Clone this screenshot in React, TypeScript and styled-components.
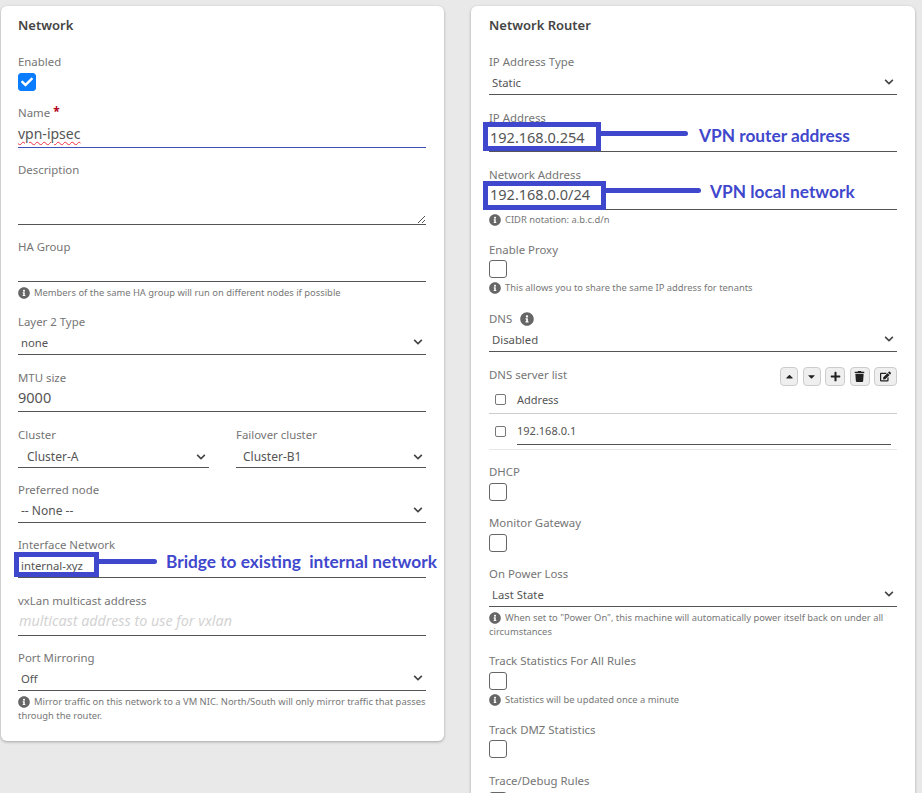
import React from 'react'
import styled, { createGlobalStyle } from 'styled-components'
import {
  FaCaretDown,
  FaCaretUp,
  FaCheck,
  FaChevronDown,
  FaEdit,
  FaInfoCircle,
  FaPlus,
  FaTrash,
} from 'react-icons/fa'

const GlobalStyle = createGlobalStyle`
  html, body {
    margin: 0;
    height: 793px;
    overflow: hidden;
    background: #e9e9e9;
    font-family: 'Noto Sans', 'Open Sans', sans-serif;
    color: #555;
  }
`

const Page = styled.div`
  display: flex;
  align-items: flex-start;
  gap: 27px;
  padding: 6px 0 0 1px;
`

const Card = styled.section`
  width: 443px;
  box-sizing: border-box;
  padding: 9px 18px 18px 17px;
  background: #fff;
  border-radius: 6px;
  box-shadow: 0 1px 3px rgba(0, 0, 0, 0.3);
  flex-shrink: 0;
`

const RouterPanel = styled(Card)`
  width: 444px;
  padding-left: 18px;
`

const Title = styled.h2`
  margin: 0;
  font-size: 13px;
  line-height: 20px;
  font-weight: 600;
  color: #444;
`

const Field = styled.div<{ $gap?: number }>`
  margin-top: ${(p) => p.$gap ?? 14}px;
`

const Label = styled.div`
  height: 16px;
  line-height: 16px;
  font-size: 11.4px;
  color: #757575;
  display: flex;
  align-items: center;
  gap: 3px;
`

const Required = styled.span`
  color: #b00020;
  font-size: 12px;
  font-weight: 700;
  line-height: 10px;
  margin-top: -3px;
`

const Control = styled.div<{ $h?: number; $active?: boolean }>`
  position: relative;
  height: ${(p) => p.$h ?? 24}px;
  border-bottom: 1px solid ${(p) => (p.$active ? '#3f51b5' : '#555')};
`

const InputText = styled.div<{ $size?: number; $misspelled?: boolean; $indent?: number; $lift?: number }>`
  height: 100%;
  box-sizing: border-box;
  display: flex;
  align-items: center;
  padding-left: ${(p) => p.$indent ?? 0}px;
  padding-bottom: ${(p) => p.$lift ?? 4}px;
  font-size: ${(p) => p.$size ?? 14.5}px;
  color: #555;
  span {
    text-decoration: ${(p) => (p.$misspelled ? 'underline wavy #f03040 1px' : 'none')};
    text-underline-offset: 2px;
  }
`

const Placeholder = styled(InputText)`
  font-size: 14.3px;
  font-style: italic;
  color: #d3d3d3;
  padding-left: 1px;
  padding-bottom: 3px;
`

const SelectBox = styled.div<{ $size?: number; $indent?: number; $drop?: number }>`
  height: 100%;
  box-sizing: border-box;
  display: flex;
  align-items: center;
  justify-content: space-between;
  padding: ${(p) => p.$drop ?? 0}px 3px 0 ${(p) => p.$indent ?? 3}px;
  font-size: ${(p) => p.$size ?? 11.3}px;
  color: #555;
  svg {
    width: 10px;
    height: 10px;
    color: #444;
  }
`

const Resize = styled.svg`
  position: absolute;
  right: 1px;
  bottom: 1px;
  width: 8px;
  height: 8px;
`

const Help = styled.div<{ $top?: number }>`
  margin-top: ${(p) => p.$top ?? 3}px;
  font-size: 9.4px;
  line-height: 14px;
  color: #777;
  svg {
    width: 12px;
    height: 12px;
    margin-right: 4px;
    color: #666;
    vertical-align: -2.5px;
  }
`

const Check = styled.div<{ $on?: boolean; $top?: number }>`
  width: 18px;
  height: 18px;
  margin-top: ${(p) => p.$top ?? 3}px;
  box-sizing: border-box;
  border-radius: 3px;
  display: flex;
  align-items: center;
  justify-content: center;
  background: ${(p) => (p.$on ? '#0a7cff' : '#fff')};
  border: 1px solid ${(p) => (p.$on ? '#0a7cff' : '#666')};
  color: #fff;
  svg {
    width: 12px;
    height: 12px;
  }
`

const TwoColumns = styled.div`
  display: grid;
  grid-template-columns: 191px 190px;
  column-gap: 27px;
  margin-top: 15px;
`

const ListHeader = styled.div`
  display: flex;
  align-items: flex-start;
  justify-content: space-between;
  height: 19px;
  margin-top: 15px;
`

const ToolButtons = styled.div`
  display: flex;
  gap: 4.5px;
`

const ToolButton = styled.button<{ $w: number }>`
  width: ${(p) => p.$w}px;
  height: 19px;
  padding: 0;
  display: flex;
  align-items: center;
  justify-content: center;
  background: #efefef;
  border: 1px solid #ccc;
  border-radius: 4px;
  color: #222;
  svg {
    width: 11px;
    height: 11px;
  }
`

const ListRow = styled.div<{ $h: number; $line: string }>`
  display: flex;
  align-items: center;
  gap: 11px;
  height: ${(p) => p.$h}px;
  box-sizing: border-box;
  padding: 0 0 1px 6px;
  border-bottom: 1px solid ${(p) => p.$line};
  font-size: 11px;
  color: #555;
`

const SmallCheck = styled.div`
  width: 11px;
  height: 11px;
  box-sizing: border-box;
  border: 1px solid #777;
  border-radius: 2px;
  flex-shrink: 0;
`

const RowInput = styled.div`
  align-self: flex-end;
  width: 374px;
  height: 27px;
  box-sizing: border-box;
  display: flex;
  align-items: center;
  padding-bottom: 2px;
  border-bottom: 1px solid #555;
  margin-bottom: 3px;
`

const InlineInfo = styled(FaInfoCircle)`
  width: 14px;
  height: 14px;
  margin-left: 5px;
  color: #666;
`

/* the blue marks drawn over the screenshot */
const MarkBox = styled.div<{ $l: number; $t: number; $w: number; $h: number }>`
  position: absolute;
  left: ${(p) => p.$l}px;
  top: ${(p) => p.$t}px;
  width: ${(p) => p.$w}px;
  height: ${(p) => p.$h}px;
  box-sizing: border-box;
  border: 5px solid #3f48cc;
`

const MarkLine = styled.div<{ $l: number; $t: number; $w: number }>`
  position: absolute;
  left: ${(p) => p.$l}px;
  top: ${(p) => p.$t}px;
  width: ${(p) => p.$w}px;
  height: 5px;
  background: #3f48cc;
  border-radius: 0 3px 3px 0;
`

const MarkText = styled.div<{ $l: number; $t: number }>`
  position: absolute;
  left: ${(p) => p.$l}px;
  top: ${(p) => p.$t}px;
  font-family: Lato, 'Open Sans', sans-serif;
  font-size: 17.3px;
  line-height: 20px;
  font-weight: 700;
  color: #3f48cc;
  white-space: pre;
`

const Select = ({
  label,
  value,
  gap,
  size,
}: {
  label: string
  value: string
  gap?: number
  size?: number
}) => (
  <Field $gap={gap}>
    <Label>{label}</Label>
    <Control>
      <SelectBox $size={size}>
        {value}
        <FaChevronDown />
      </SelectBox>
    </Control>
  </Field>
)

const Hint = ({ children, top }: { children: React.ReactNode; top?: number }) => (
  <Help $top={top}>
    <FaInfoCircle />
    {children}
  </Help>
)

const CheckField = ({ label, gap, top }: { label: string; gap?: number; top?: number }) => (
  <Field $gap={gap}>
    <Label>{label}</Label>
    <Check $top={top} />
  </Field>
)

const NetworkCard = () => (
  <Card>
    <Title>Network</Title>
    <Field $gap={19}>
      <Label>Enabled</Label>
      <Check $on>
        <FaCheck />
      </Check>
    </Field>
    <Field>
      <Label>
        Name <Required>*</Required>
      </Label>
      <Control $h={26} $active>
        <InputText $misspelled $size={14} $lift={2}>
          <span>vpn-ipsec</span>
        </InputText>
      </Control>
    </Field>
    <Field>
      <Label>Description</Label>
      <Control $h={46}>
        <Resize viewBox="0 0 8 8">
          <path d="M1 8 8 1M5 8 8 5" stroke="#555" strokeWidth="1" />
        </Resize>
      </Control>
    </Field>
    <Field>
      <Label>HA Group</Label>
      <Control $h={26} />
      <Hint top={4}>Members of the same HA group will run on different nodes if possible</Hint>
    </Field>
    <Select label="Layer 2 Type" value="none" />
    <Field $gap={15}>
      <Label>MTU size</Label>
      <Control $h={25}>
        <InputText>9000</InputText>
      </Control>
    </Field>
    <TwoColumns>
      <div>
        <Label>Cluster</Label>
        <Control>
          <SelectBox $size={12} $indent={9} $drop={3}>
            Cluster-A
            <FaChevronDown />
          </SelectBox>
        </Control>
      </div>
      <div>
        <Label>Failover cluster</Label>
        <Control>
          <SelectBox $size={12} $indent={7} $drop={3}>
            Cluster-B1
            <FaChevronDown />
          </SelectBox>
        </Control>
      </div>
    </TwoColumns>
    <Select label="Preferred node" value="-- None --" size={12} />
    <Field>
      <Label>Interface Network</Label>
      <Control>
        <SelectBox>internal-xyz</SelectBox>
        <MarkBox $l={-4} $t={-1} $w={85} $h={25} />
        <MarkLine $l={81} $t={6} $w={58} />
        <MarkText $l={148} $t={-1}>
          Bridge to existing  internal network
        </MarkText>
      </Control>
    </Field>
    <Field $gap={15}>
      <Label>vxLan multicast address</Label>
      <Control $h={26}>
        <Placeholder>multicast address to use for vxlan</Placeholder>
      </Control>
    </Field>
    <Field>
      <Label>Port Mirroring</Label>
      <Control>
        <SelectBox>
          Off
          <FaChevronDown />
        </SelectBox>
      </Control>
      <Hint top={4}>
        Mirror traffic on this network to a VM NIC. North/South will only mirror traffic that
        passes through the router.
      </Hint>
    </Field>
  </Card>
)

const RouterCard = () => (
  <RouterPanel>
    <Title>Network Router</Title>
    <Select label="IP Address Type" value="Static" gap={19} />
    <Field $gap={15}>
      <Label>IP Address</Label>
      <Control $h={25}>
        <InputText $indent={1}>192.168.0.254</InputText>
        <MarkBox $l={-6} $t={-4} $w={118} $h={29} />
        <MarkLine $l={112} $t={5} $w={87} />
        <MarkText $l={210} $t={0}>
          VPN router address
        </MarkText>
      </Control>
    </Field>
    <Field $gap={15}>
      <Label>Network Address</Label>
      <Control $h={26}>
        <InputText $indent={1}>192.168.0.0/24</InputText>
        <MarkBox $l={-6} $t={-2} $w={123} $h={29} />
        <MarkLine $l={117} $t={5} $w={95} />
        <MarkText $l={221} $t={-1}>
          VPN local network
        </MarkText>
      </Control>
      <Hint>CIDR notation: a.b.c.d/n</Hint>
    </Field>
    <CheckField label="Enable Proxy" gap={15} top={2} />
    <Hint>This allows you to share the same IP address for tenants</Hint>
    <Field $gap={16}>
      <Label>
        DNS <InlineInfo />
      </Label>
      <Control>
        <SelectBox>
          Disabled
          <FaChevronDown />
        </SelectBox>
      </Control>
    </Field>
    <ListHeader>
      <Label>DNS server list</Label>
      <ToolButtons>
        <ToolButton $w={18}>
          <FaCaretUp />
        </ToolButton>
        <ToolButton $w={18}>
          <FaCaretDown />
        </ToolButton>
        <ToolButton $w={20}>
          <FaPlus />
        </ToolButton>
        <ToolButton $w={20}>
          <FaTrash />
        </ToolButton>
        <ToolButton $w={23}>
          <FaEdit />
        </ToolButton>
      </ToolButtons>
    </ListHeader>
    <ListRow $h={28} $line="#ccc">
      <SmallCheck />
      Address
    </ListRow>
    <ListRow $h={36} $line="#e6e6e6">
      <SmallCheck />
      <RowInput>192.168.0.1</RowInput>
    </ListRow>
    <CheckField label="DHCP" />
    <CheckField label="Monitor Gateway" />
    <Field>
      <Label>On Power Loss</Label>
      <Control>
        <SelectBox>
          Last State
          <FaChevronDown />
        </SelectBox>
      </Control>
      <Hint top={4}>
        When set to &quot;Power On&quot;, this machine will automatically power itself back on
        under all circumstances
      </Hint>
    </Field>
    <CheckField label="Track Statistics For All Rules" />
    <Hint>Statistics will be updated once a minute</Hint>
    <CheckField label="Track DMZ Statistics" gap={15} top={2} />
    <CheckField label="Trace/Debug Rules" gap={15} />
  </RouterPanel>
)

export default function App() {
  return (
    <>
      <GlobalStyle />
      <Page>
        <NetworkCard />
        <RouterCard />
      </Page>
    </>
  )
}
